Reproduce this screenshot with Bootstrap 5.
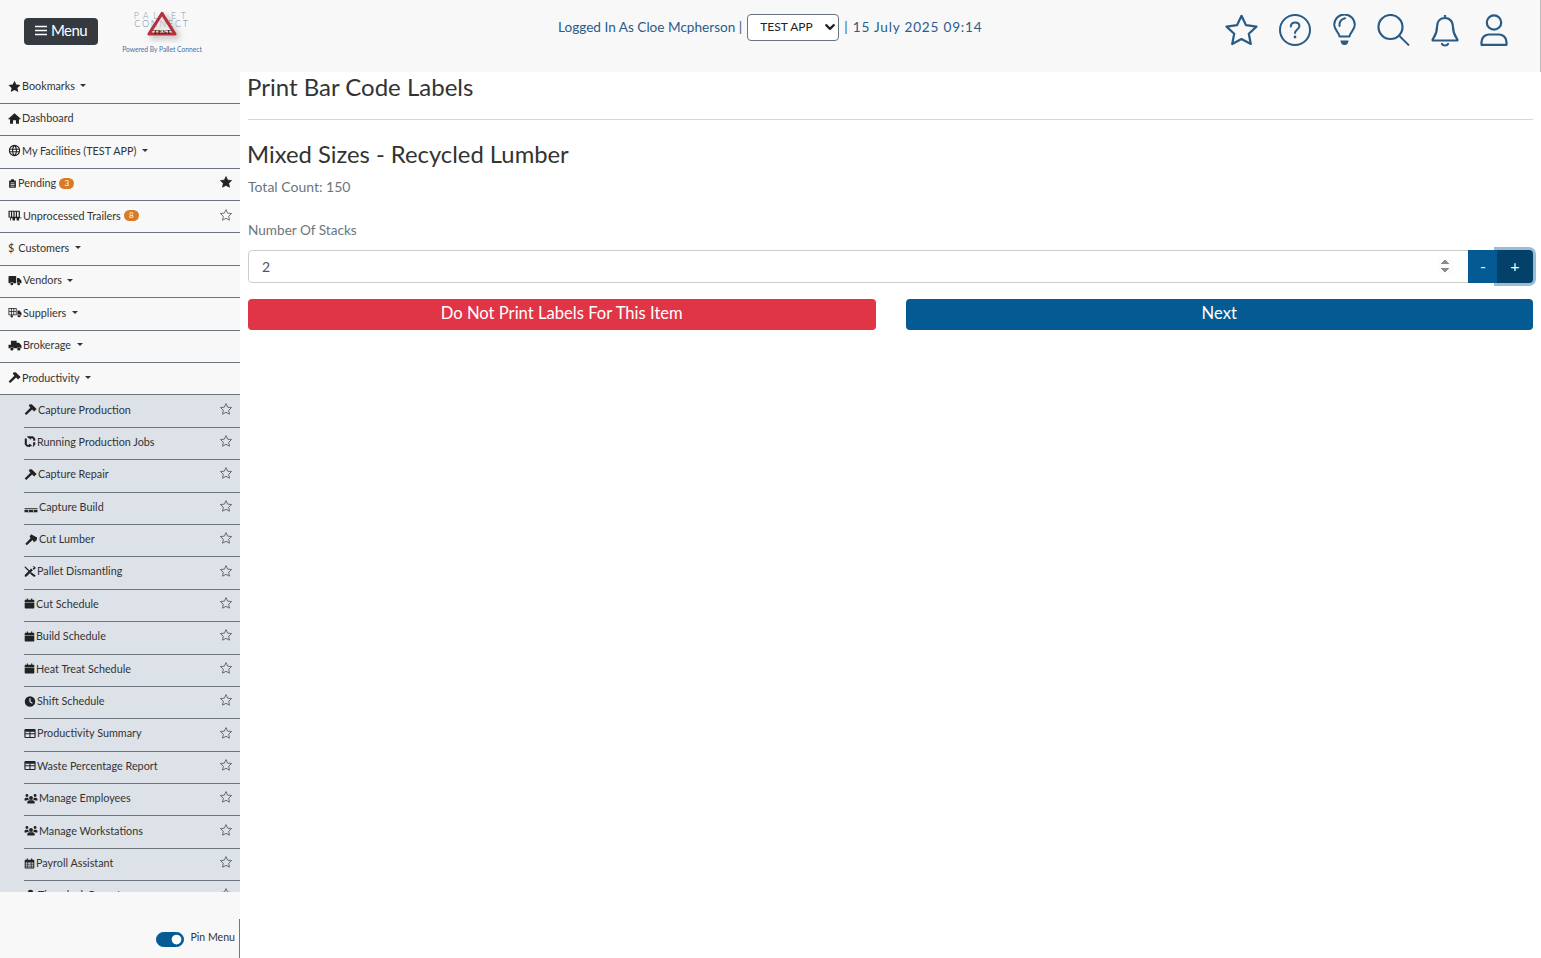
<!DOCTYPE html>
<html lang="en">
<head>
<meta charset="utf-8">
<title>Print Bar Code Labels</title>
<link href="https://cdn.jsdelivr.net/npm/bootstrap@5.3.0/dist/css/bootstrap.min.css" rel="stylesheet">
<style>
html,body{height:100%}
body{font-family:"Lato","Open Sans",sans-serif;font-weight:300;color:#333;background:#fff;overflow:hidden}
.app-shell{height:958px}
.top-bar{height:71.5px;background:#f8f8f8;padding:0 32px 0 24px;flex:none;border-right:1px solid #bbb}
.menu-btn{width:74px;height:27px;margin-top:18px;background:#343a40;color:#fff;font-size:15px;font-weight:400;padding:0 0 2px;border:0;border-radius:4px;letter-spacing:-.6px}
.menu-btn:hover{background:#343a40;color:#fff}
.logo-box{width:90px;margin-left:19px;margin-top:9px;height:54px}
.logo-box svg{display:block;margin:0 auto}
.powered{font-size:6.7px;font-weight:400;color:#4a6fa5;text-align:center;white-space:nowrap;line-height:8px;margin-top:2px}
.status-line{font-size:13.6px;font-weight:400;color:#2b5b8a;position:absolute;left:558px;top:13px;height:28px;white-space:nowrap}
.stamp{letter-spacing:.8px}
.env-select{width:92px;height:27px;font-size:12px;font-weight:400;padding:0 0 0 12px;border:1px solid #6c757d;border-radius:4px;color:#222;background-image:url("data:image/svg+xml,%3csvg xmlns='http://www.w3.org/2000/svg' viewBox='0 0 16 16'%3e%3cpath fill='none' stroke='%23222' stroke-linecap='round' stroke-linejoin='round' stroke-width='3.4' d='m2 5 6 6 6-6'/%3e%3c/svg%3e");background-position:right 3px center;background-size:10px 10px;margin:0 5px;font-family:inherit}
.top-icons{gap:21px;margin-top:14px}
.top-icons .nudge{margin-right:1px}
.top-icons .nudge-l{margin-left:-1px}
.side-panel{width:240px;flex:none;background:#f8f8f8}
.side-scroll{height:820.5px;overflow:hidden}
.side-row{height:32.4px;font-size:10.8px;font-weight:400;color:#333;border-bottom:1px solid #6c757d;padding:0 8px 2px 8px;background:transparent;white-space:nowrap}
.side-sub{background:#dde2e9;padding-left:24px}
.side-sub .side-row{padding-left:0;padding-bottom:3px}
.ico{width:13px;height:13px;fill:#222;flex:none;margin-right:1px}
.fav{width:12px;height:12px;flex:none;fill:none;stroke:#444;stroke-width:1;margin-bottom:2px}
.fav-on{fill:#222;stroke:#222}
.w9{width:9px}.w10{width:11px}.w11{width:12px}.w13{width:14px}
.count-pill{background:#d97a26;color:#fff;font-size:8px;width:15px;height:11px;border-radius:6px;line-height:11px;text-align:center;margin-left:3px;display:inline-block}
.pin-foot{height:66px;flex:none;background:#f8f8f8}
.pin-inner{height:39px;width:100%;border-right:1px solid #777;padding-right:4px;margin-top:27px;font-size:10.6px;font-weight:400}
.pin-switch{min-height:0;margin:0 6px 0 0;padding:0}
.pin-switch .form-check-input{width:28px;height:15px;margin:13px 0 0 0;float:none;display:block;background-color:#045a92;border-color:#045a92}
.pin-text{margin-top:12px;line-height:12px}
.work-area{padding:0 8px 0 8px;background:#fff}
.page-title{font-size:24px;font-weight:400;color:#333;margin:0 0 0 -1px;line-height:30px}
.title-rule{margin:17px 0 19px 0;border-top:1px solid #999;opacity:.4}
.sub-title{font-size:23.8px;font-weight:400;margin:0 0 0 -1px;line-height:30px;color:#333}
.total-line{font-size:14px;color:#6c757d;margin-top:8px;line-height:20px;font-weight:400}
.stack-label{font-size:13.6px;color:#6c757d;margin:23px 0 10px;line-height:20px;font-weight:400}
.stack-group .form-control{height:33px;font-size:14px;font-weight:400;color:#555;border-color:#ccc;border-radius:4px 0 0 4px;padding-left:13px;padding-right:15px}
.stack-group input::-webkit-inner-spin-button{opacity:1}
.step-btn{height:33px;background:#045a92;border:0;color:#fff;font-size:16px;padding:0;border-radius:0}
.step-minus{width:30px}
.step-plus{width:36px;background:#03406a;border-radius:0 4px 4px 0;box-shadow:0 0 0 3px rgba(4,90,146,.4);position:relative;z-index:2}
.step-btn:hover{color:#fff;background:#045a92}
.step-plus:hover{background:#03406a}
.act-grid{display:grid;grid-template-columns:1fr 1fr;gap:30px;margin-top:16px}
.act-btn{height:31px;font-size:16.6px;font-weight:400;padding:0 0 2px;border:0;color:#fff;border-radius:4px}
.act-red{background:#e03546}
.act-blue{background:#045a92}
.act-red:hover{background:#e03546;color:#fff}
.act-blue:hover{background:#045a92;color:#fff}
</style>
</head>
<body>
<svg width="0" height="0" class="position-absolute">
<defs>
<symbol id="i-star" viewBox="0 0 16 16"><polygon points="8,.8 10.2,5.5 15.4,6.1 11.6,9.7 12.6,14.9 8,12.4 3.4,14.9 4.4,9.7 .6,6.1 5.8,5.5"/></symbol>
<symbol id="i-house" viewBox="0 0 16 16"><path d="M8 1.5 15.7 8.2 14.7 9.4 13.5 8.4V14.5H9.8V10H6.2V14.5H2.5V8.4L1.3 9.4.3 8.2Z"/></symbol>
<symbol id="i-globe" viewBox="0 0 16 16"><path fill-rule="evenodd" d="M8 1a7 7 0 1 1 0 14A7 7 0 0 1 8 1ZM6.3 2.9C5.7 3.8 5.3 4.8 5.1 5.9H2.8C3.4 4.5 4.7 3.4 6.3 2.9ZM9.7 2.9C11.3 3.4 12.6 4.5 13.2 5.9H10.9C10.7 4.8 10.3 3.8 9.7 2.9ZM8 2.7C8.6 3.5 9.2 4.6 9.5 5.9H6.5C6.8 4.6 7.4 3.5 8 2.7ZM2.4 7.2H5V8.8H2.4ZM6.3 7.2H9.7V8.8H6.3ZM11 7.2H13.6V8.8H11ZM2.8 10.1H5.1C5.3 11.2 5.7 12.2 6.3 13.1 4.7 12.6 3.4 11.5 2.8 10.1ZM6.5 10.1H9.5C9.2 11.4 8.6 12.5 8 13.3 7.4 12.5 6.8 11.4 6.5 10.1ZM10.9 10.1H13.2C12.6 11.5 11.3 12.6 9.7 13.1 10.3 12.2 10.7 11.2 10.9 10.1Z"/></symbol>
<symbol id="i-clip" viewBox="0 0 16 16"><path fill-rule="evenodd" d="M5.5 .5H10.5V2.5H13A1 1 0 0 1 14 3.5V14.5A1 1 0 0 1 13 15.5H3A1 1 0 0 1 2 14.5V3.5A1 1 0 0 1 3 2.5H5.5ZM4.5 6V7.4H11.5V6ZM4.5 9V10.4H11.5V9ZM4.5 12V13.2H11.5V12Z"/></symbol>
<symbol id="i-trailer" viewBox="0 0 16 16"><path fill-rule="evenodd" d="M0 2H14V10.5H16V11.5H13V14H10V11.5H8V14H5V11.5H3V14H2V10.5H0ZM1.5 3.5V9.5H3V3.5ZM4.5 3.5V9.5H6V3.5ZM7.5 3.5V9.5H9V3.5ZM10.5 3.5V9.5H12.5V3.5Z"/></symbol>
<symbol id="i-truck" viewBox="0 0 16 16"><path d="M0 3.5A1 1 0 0 1 1 2.5H9.5V11.5H6.2A2.2 2.2 0 0 0 2 11.5H1A1 1 0 0 1 0 10.5ZM10.5 5H13L16 8.2V11.5H14.6A2.2 2.2 0 0 0 10.5 11.5ZM4.1 10.5A1.7 1.7 0 1 1 4.1 13.9 1.7 1.7 0 0 1 4.1 10.5ZM12.5 10.5A1.7 1.7 0 1 1 12.5 13.9 1.7 1.7 0 0 1 12.5 10.5Z"/></symbol>
<symbol id="i-supply" viewBox="0 0 16 16"><path fill-rule="evenodd" d="M0 2.5H10V11.5H0ZM1 3.5V6.5H3V3.5ZM4 3.5V6.5H6V3.5ZM7 3.5V6.5H9V3.5ZM1 7.5V10.5H3V7.5ZM4 7.5V10.5H6V7.5ZM7 7.5V10.5H9V7.5ZM11 5.5H13.5L16 8.5V11.5H11ZM13 10A1.9 1.9 0 1 1 13 13.8 1.9 1.9 0 0 1 13 10ZM4 11A1.5 1.5 0 1 1 4 14 1.5 1.5 0 0 1 4 11Z"/></symbol>
<symbol id="i-broker" viewBox="0 0 16 16"><path d="M3 2H10V4.5H13L16 8V11.5H15A2.4 2.4 0 0 0 10.5 11.5H6.5A2.4 2.4 0 0 0 2 11.5H0V7H3ZM4.2 10.2A2 2 0 1 1 4.2 14.2 2 2 0 0 1 4.2 10.2ZM12.7 10.2A2 2 0 1 1 12.7 14.2 2 2 0 0 1 12.7 10.2Z"/></symbol>
<symbol id="i-hammer" viewBox="0 0 16 16"><path d="M6.5 1.8 9.5 1.5 15.5 7.5 12.5 10.5 10 8 2.8 14.8.8 12.8 7.8 5.8 6 3.5Z"/></symbol>
<symbol id="i-recycle" viewBox="0 0 16 16"><path d="M4 1H12L15 4V7H12.2V4.5L10.8 3.5H9.5V5.5L5 2.6ZM1 4H3.8V11.5L5.2 12.5H6.5V10.5L11 13.4 6.5 15.5V15H4L1 12ZM12.2 9H15V12L12.5 15H11.5L12.2 13Z"/></symbol>
<symbol id="i-beam" viewBox="0 0 16 16"><path fill-rule="evenodd" d="M0 10H16V11H0ZM0 12H16V15H0ZM4.5 12.6V14.4H5.6V12.6ZM10.4 12.6V14.4H11.5V12.6Z"/></symbol>
<symbol id="i-axe" viewBox="0 0 16 16"><path d="M8 1.5 15.5 5.5C15.8 8.5 14 10.5 11.5 11L10 8.5 2.8 15 1 13.2 7.5 6.5 6.3 4.5Z"/></symbol>
<symbol id="i-tools" viewBox="0 0 16 16"><path d="M1.5 1 7 6.2 5.8 7.5.6 2.2ZM12.5 1C14 1 15.3 2 15.6 3.5L13.2 5.5 11.5 4.5 13.5 2 11.5 1.5C11.5 1.2 12 1 12.5 1ZM9.5 4 11.8 6.3 3.5 14.8 1 15 1 12.5ZM9.5 9 15.2 13 15 14.8 13 15 8 10.5Z"/></symbol>
<symbol id="i-cal" viewBox="0 0 16 16"><path d="M4 .8H5.7V2.5H10.3V.8H12V2.5H14A1 1 0 0 1 15 3.5V6H1V3.5A1 1 0 0 1 2 2.5H4ZM1 7H15V14.2A1 1 0 0 1 14 15.2H2A1 1 0 0 1 1 14.2Z"/></symbol>
<symbol id="i-calgrid" viewBox="0 0 16 16"><path fill-rule="evenodd" d="M4 .8H5.7V2.5H10.3V.8H12V2.5H14A1 1 0 0 1 15 3.5V14.2A1 1 0 0 1 14 15.2H2A1 1 0 0 1 1 14.2V3.5A1 1 0 0 1 2 2.5H4ZM2.5 6.5V8.5H5V6.5ZM6 6.5V8.5H10V6.5ZM11 6.5V8.5H13.5V6.5ZM2.5 9.5V11.2H5V9.5ZM6 9.5V11.2H10V9.5ZM11 9.5V11.2H13.5V9.5ZM2.5 12.2V13.8H5V12.2ZM6 12.2V13.8H10V12.2ZM11 12.2V13.8H13.5V12.2Z"/></symbol>
<symbol id="i-clock" viewBox="0 0 16 16"><path fill-rule="evenodd" d="M8 1a7 7 0 1 1 0 14A7 7 0 0 1 8 1ZM7.2 3.5V8.6L10.8 11 11.6 9.8 8.8 7.9V3.5Z"/></symbol>
<symbol id="i-table" viewBox="0 0 16 16"><path fill-rule="evenodd" d="M2 2H14A1.5 1.5 0 0 1 15.5 3.5V12.5A1.5 1.5 0 0 1 14 14H2A1.5 1.5 0 0 1 .5 12.5V3.5A1.5 1.5 0 0 1 2 2ZM2 5.5V7.7H7.3V5.5ZM8.7 5.5V7.7H14V5.5ZM2 9V12.5H7.3V9ZM8.7 9V12.5H14V9Z"/></symbol>
<symbol id="i-users" viewBox="0 0 16 16"><path d="M8 5A2.4 2.4 0 1 1 8 9.8 2.4 2.4 0 0 1 8 5ZM3 2.5A1.8 1.8 0 1 1 3 6.1 1.8 1.8 0 0 1 3 2.5ZM13 2.5A1.8 1.8 0 1 1 13 6.1 1.8 1.8 0 0 1 13 2.5ZM3.5 14V12.5C3.5 11.2 4.7 10.3 6 10.3H10C11.3 10.3 12.5 11.2 12.5 12.5V14ZM0 10.5V9C0 7.8 1 7 2 7H4.5C4.7 8.2 5.2 9 6 9.6 4.2 9.7 3 10.2 2.6 10.5ZM16 10.5V9C16 7.8 15 7 14 7H11.5C11.3 8.2 10.8 9 10 9.6 11.8 9.7 13 10.2 13.4 10.5Z"/></symbol>
<symbol id="i-person" viewBox="0 0 16 16"><path d="M8 1A3.4 3.4 0 1 1 8 7.8 3.4 3.4 0 0 1 8 1ZM2 15V13C2 10.5 4 9 6 9H10C12 9 14 10.5 14 13V15Z"/></symbol>
</defs>
</svg>

<div class="app-shell d-flex flex-column position-relative">
  <header class="top-bar d-flex align-items-start">
    <button class="btn menu-btn d-flex align-items-center justify-content-center gap-1 flex-none" type="button">
      <svg width="12" height="11" viewBox="0 0 12 11" fill="none" stroke="#fff" stroke-width="1.4"><path d="M0 1.5H12M0 5.5H12M0 9.5H12"/></svg>Menu
    </button>
    <div class="logo-box">
      <svg width="60" height="34" viewBox="0 0 60 34">
        <defs><filter id="lg-sh" x="-40%" y="-40%" width="190%" height="190%"><feDropShadow dx="3" dy="3" stdDeviation="3" flood-color="#777" flood-opacity=".6"/></filter></defs>
        <text x="30" y="10" font-size="9" letter-spacing="4.4" fill="#8f9bb0" text-anchor="middle" font-family="Lato, sans-serif">PALLET</text>
        <text x="30" y="18" font-size="9" letter-spacing="1.8" fill="#6f86a6" text-anchor="middle" font-family="Lato, sans-serif">CONNECT</text>
        <path d="M30 4.5 43 25H17Z" fill="rgba(255,255,255,.25)" stroke="#b5303c" stroke-width="3.2" stroke-linejoin="round" filter="url(#lg-sh)"/>
        <text x="30" y="24.5" font-size="7" font-weight="700" fill="#222" text-anchor="middle" font-family="Liberation Serif, serif">TEST</text>
      </svg>
      <div class="powered">Powered By Pallet Connect</div>
    </div>
    <div class="status-line d-flex align-items-center">
      <span>Logged In As Cloe Mcpherson |</span>
      <select class="form-select env-select" aria-label="Application"><option>TEST APP</option></select>
      <span class="stamp">| 15 July 2025 09:14</span>
    </div>
    <div class="top-icons d-flex ms-auto">
      <svg class="nudge-l" width="33" height="32" viewBox="0 0 33 32" fill="none" stroke="#2a5b85" stroke-width="2.2" stroke-linejoin="round"><path d="M16.5 1.8 21 11.2 31.5 12.6 23.8 19.7 25.8 30 16.5 25 7.2 30 9.2 19.7 1.5 12.6 12 11.2Z"/></svg>
      <svg class="nudge" width="32" height="32" viewBox="0 0 32 32" fill="none" stroke="#2a5b85" stroke-width="2"><circle cx="16" cy="16" r="15"/><path d="M11.8 12.5C12 9.8 14 8.6 16.2 8.6 18.6 8.6 20.4 10 20.4 12.2 20.4 15.4 16 15.6 16 19" stroke-linecap="round"/><circle cx="16" cy="23" r="1.4" fill="#2a5b85" stroke="none"/></svg>
      <svg width="23" height="32" viewBox="0 0 23 32" fill="none" stroke="#2a5b85" stroke-width="2"><path d="M6.5 22.5C6 18 1.2 16 1.2 10.8A10.3 10.3 0 0 1 21.8 10.8C21.8 16 17 18 16.5 22.5Z" stroke-linejoin="round"/><path d="M6.5 12C6.2 8 8.5 5 12 4.2" stroke-linecap="round"/><path d="M7.5 26.5H15.5C15.2 30 13.5 31 11.5 31S7.8 30 7.5 26.5Z" fill="#2a5b85" stroke="none"/></svg>
      <svg width="33" height="32" viewBox="0 0 33 32" fill="none" stroke="#2a5b85" stroke-width="2.2"><circle cx="13.5" cy="13" r="12"/><path d="M22 21.5 32 31.5" stroke-width="1.8"/></svg>
      <svg width="28" height="33" viewBox="0 0 28 33" fill="none" stroke="#2a5b85" stroke-width="2.2"><path d="M14 1V4M14 4C8 4 6 9 6 13 6 20 3.5 22.5 1.6 25.5V26.5H26.4V25.5C24.5 22.5 22 20 22 13 22 9 20 4 14 4Z" stroke-linejoin="round"/><path d="M11 30C12 32 16 32 17 30" stroke-linecap="round"/></svg>
      <svg width="28" height="32" viewBox="0 0 28 32" fill="none" stroke="#2a5b85" stroke-width="2.2"><circle cx="14" cy="8.5" r="7.2"/><path d="M1.5 30.8V28C1.5 23 5.5 20.5 9 20.5H19C22.5 20.5 26.5 23 26.5 28V30.8Z" stroke-linejoin="round"/></svg>
    </div>
  </header>

  <div class="d-flex flex-grow-1 overflow-hidden">
    <aside class="side-panel d-flex flex-column">
      <div class="side-scroll">
        <div class="side-row d-flex align-items-center"><svg class="ico"><use href="#i-star"/></svg><span class="dropdown-toggle">Bookmarks&nbsp;</span></div>
        <div class="side-row d-flex align-items-center"><svg class="ico"><use href="#i-house"/></svg><span>Dashboard</span></div>
        <div class="side-row d-flex align-items-center"><svg class="ico"><use href="#i-globe"/></svg><span class="dropdown-toggle">My Facilities (TEST APP)&nbsp;</span></div>
        <div class="side-row d-flex align-items-center"><svg class="ico w9"><use href="#i-clip"/></svg><span>Pending</span><span class="count-pill">3</span><svg class="fav fav-on ms-auto"><use href="#i-star"/></svg></div>
        <div class="side-row d-flex align-items-center"><svg class="ico w13"><use href="#i-trailer"/></svg><span>Unprocessed Trailers</span><span class="count-pill">8</span><svg class="fav ms-auto"><use href="#i-star"/></svg></div>
        <div class="side-row d-flex align-items-center"><span class="me-1">$</span><span class="dropdown-toggle">Customers&nbsp;</span></div>
        <div class="side-row d-flex align-items-center"><svg class="ico w13"><use href="#i-truck"/></svg><span class="dropdown-toggle">Vendors&nbsp;</span></div>
        <div class="side-row d-flex align-items-center"><svg class="ico w13"><use href="#i-supply"/></svg><span class="dropdown-toggle">Suppliers&nbsp;</span></div>
        <div class="side-row d-flex align-items-center"><svg class="ico w13"><use href="#i-broker"/></svg><span class="dropdown-toggle">Brokerage&nbsp;</span></div>
        <div class="side-row d-flex align-items-center"><svg class="ico"><use href="#i-hammer"/></svg><span class="dropdown-toggle">Productivity&nbsp;</span></div>
        <div class="side-sub">
          <div class="side-row d-flex align-items-center"><svg class="ico"><use href="#i-hammer"/></svg><span>Capture Production</span><svg class="fav ms-auto"><use href="#i-star"/></svg></div>
          <div class="side-row d-flex align-items-center"><svg class="ico w11"><use href="#i-recycle"/></svg><span>Running Production Jobs</span><svg class="fav ms-auto"><use href="#i-star"/></svg></div>
          <div class="side-row d-flex align-items-center"><svg class="ico"><use href="#i-hammer"/></svg><span>Capture Repair</span><svg class="fav ms-auto"><use href="#i-star"/></svg></div>
          <div class="side-row d-flex align-items-center"><svg class="ico w13"><use href="#i-beam"/></svg><span>Capture Build</span><svg class="fav ms-auto"><use href="#i-star"/></svg></div>
          <div class="side-row d-flex align-items-center"><svg class="ico w13"><use href="#i-axe"/></svg><span>Cut Lumber</span><svg class="fav ms-auto"><use href="#i-star"/></svg></div>
          <div class="side-row d-flex align-items-center"><svg class="ico w11"><use href="#i-tools"/></svg><span>Pallet Dismantling</span><svg class="fav ms-auto"><use href="#i-star"/></svg></div>
          <div class="side-row d-flex align-items-center"><svg class="ico w10"><use href="#i-cal"/></svg><span>Cut Schedule</span><svg class="fav ms-auto"><use href="#i-star"/></svg></div>
          <div class="side-row d-flex align-items-center"><svg class="ico w10"><use href="#i-cal"/></svg><span>Build Schedule</span><svg class="fav ms-auto"><use href="#i-star"/></svg></div>
          <div class="side-row d-flex align-items-center"><svg class="ico w10"><use href="#i-cal"/></svg><span>Heat Treat Schedule</span><svg class="fav ms-auto"><use href="#i-star"/></svg></div>
          <div class="side-row d-flex align-items-center"><svg class="ico w11"><use href="#i-clock"/></svg><span>Shift Schedule</span><svg class="fav ms-auto"><use href="#i-star"/></svg></div>
          <div class="side-row d-flex align-items-center"><svg class="ico w11"><use href="#i-table"/></svg><span>Productivity Summary</span><svg class="fav ms-auto"><use href="#i-star"/></svg></div>
          <div class="side-row d-flex align-items-center"><svg class="ico w11"><use href="#i-table"/></svg><span>Waste Percentage Report</span><svg class="fav ms-auto"><use href="#i-star"/></svg></div>
          <div class="side-row d-flex align-items-center"><svg class="ico w13"><use href="#i-users"/></svg><span>Manage Employees</span><svg class="fav ms-auto"><use href="#i-star"/></svg></div>
          <div class="side-row d-flex align-items-center"><svg class="ico w13"><use href="#i-users"/></svg><span>Manage Workstations</span><svg class="fav ms-auto"><use href="#i-star"/></svg></div>
          <div class="side-row d-flex align-items-center"><svg class="ico w10"><use href="#i-calgrid"/></svg><span>Payroll Assistant</span><svg class="fav ms-auto"><use href="#i-star"/></svg></div>
          <div class="side-row d-flex align-items-center"><svg class="ico"><use href="#i-person"/></svg><span>Timeclock Report</span><svg class="fav ms-auto"><use href="#i-star"/></svg></div>
        </div>
      </div>
      <div class="pin-foot">
        <div class="pin-inner d-flex justify-content-end align-items-start">
          <div class="form-check form-switch pin-switch"><input class="form-check-input" type="checkbox" role="switch" checked aria-label="Pin Menu"></div>
          <span class="pin-text">Pin Menu</span>
        </div>
      </div>
    </aside>
    <main class="work-area flex-grow-1">
      <h1 class="page-title">Print Bar Code Labels</h1>
      <hr class="title-rule">
      <h2 class="sub-title">Mixed Sizes - Recycled Lumber</h2>
      <div class="total-line">Total Count: 150</div>
      <div class="stack-label">Number Of Stacks</div>
      <div class="input-group stack-group">
        <input type="number" class="form-control" value="2" aria-label="Number Of Stacks">
        <button class="btn step-btn step-minus" type="button">-</button>
        <button class="btn step-btn step-plus" type="button">+</button>
      </div>
      <div class="act-grid">
        <button class="btn act-btn act-red" type="button">Do Not Print Labels For This Item</button>
        <button class="btn act-btn act-blue" type="button">Next</button>
      </div>
    </main>
  </div>
</div>
<script src="https://cdn.jsdelivr.net/npm/bootstrap@5.3.0/dist/js/bootstrap.bundle.min.js"></script>
</body>
</html>
